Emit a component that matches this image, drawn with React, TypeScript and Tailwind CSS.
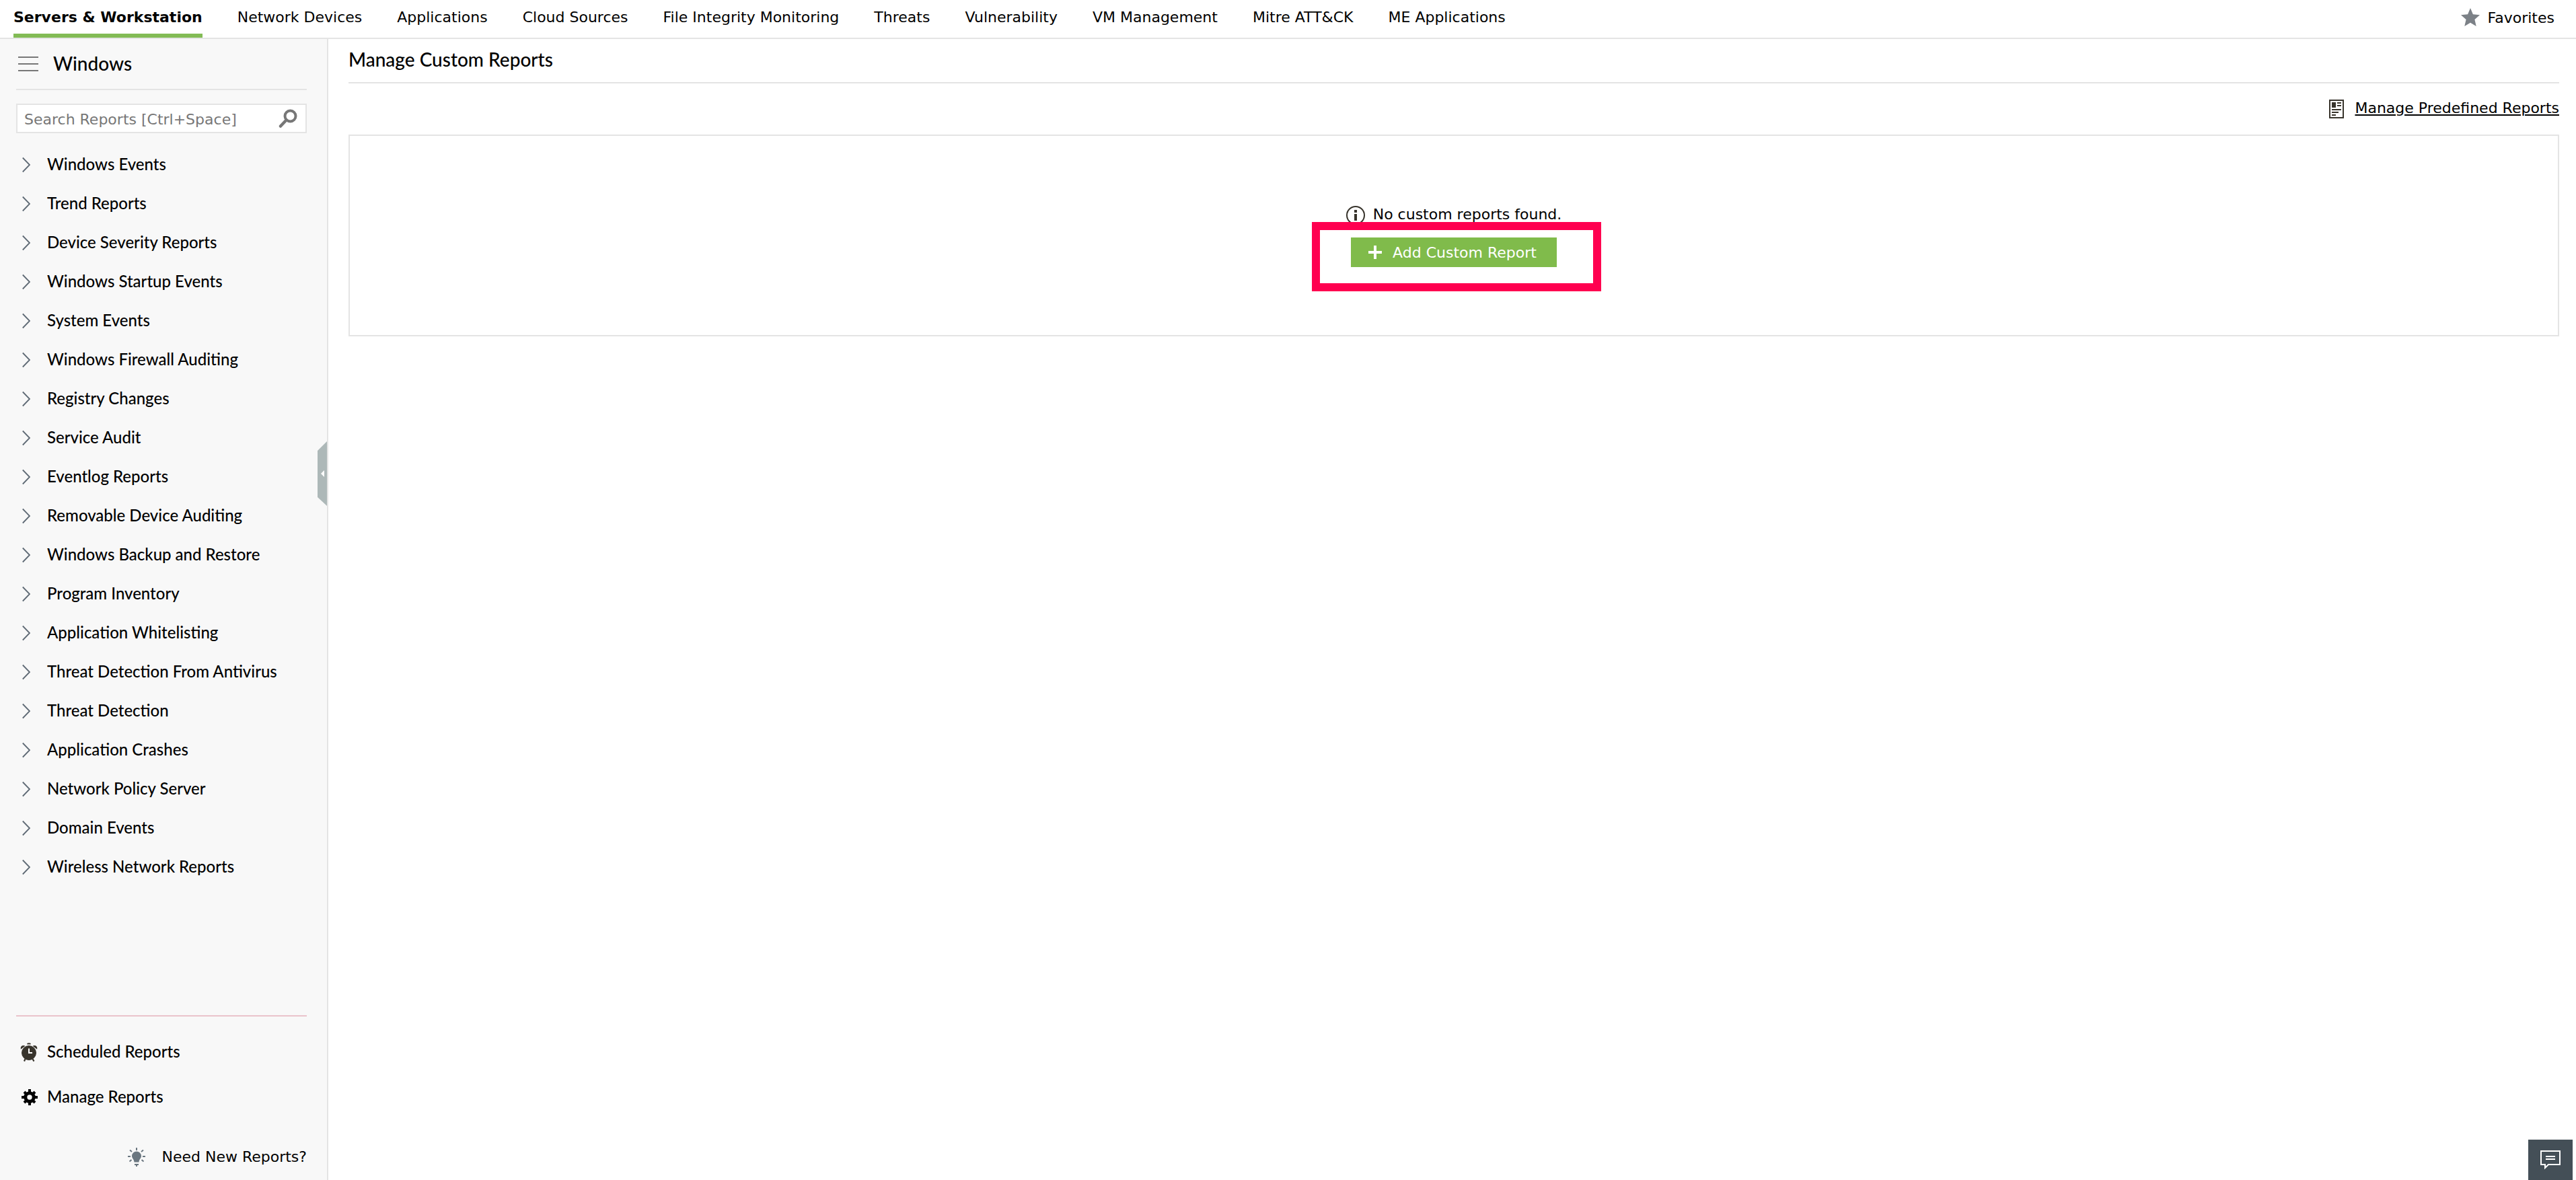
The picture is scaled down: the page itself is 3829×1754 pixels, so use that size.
import { useState } from 'react';

const NAV_ITEMS = [
  'Servers & Workstation',
  'Network Devices',
  'Applications',
  'Cloud Sources',
  'File Integrity Monitoring',
  'Threats',
  'Vulnerability',
  'VM Management',
  'Mitre ATT&CK',
  'ME Applications',
];

const REPORT_GROUPS = [
  'Windows Events',
  'Trend Reports',
  'Device Severity Reports',
  'Windows Startup Events',
  'System Events',
  'Windows Firewall Auditing',
  'Registry Changes',
  'Service Audit',
  'Eventlog Reports',
  'Removable Device Auditing',
  'Windows Backup and Restore',
  'Program Inventory',
  'Application Whitelisting',
  'Threat Detection From Antivirus',
  'Threat Detection',
  'Application Crashes',
  'Network Policy Server',
  'Domain Events',
  'Wireless Network Reports',
];

function StarIcon() {
  return (
    <svg className="w-7 h-7" viewBox="0 0 28 28" fill="#7c8187">
      <path d="M14 0l3.9 9.3 10.1.9-7.600 6.700L22.700 27 14 21.800 5.300 27l2.300-10.100L0 10.200l10.100-.9z" />
    </svg>
  );
}

function SearchIcon() {
  return (
    <svg className="w-7 h-7" viewBox="0 0 28 28" fill="none" stroke="#777">
      <circle cx="17.500" cy="10.500" r="8" strokeWidth="4" />
      <path d="M11.500 16.500L3 25.500" strokeWidth="4.500" strokeLinecap="round" />
    </svg>
  );
}

function ChevronIcon() {
  return (
    <svg className="w-3 h-6 shrink-0" viewBox="0 0 12 24" fill="none" stroke="#5f6a75" strokeWidth="1.800">
      <path d="M.8 1.500L11 12 .8 22.500" />
    </svg>
  );
}

function DocumentIcon() {
  return (
    <svg className="w-[22px] h-7" viewBox="0 0 22 28" fill="#38342c">
      <path fillRule="evenodd" d="M0 0h22v28H0zM2 2v24h18V2z" />
      <path d="M4 4h6v8H4zM12 4h6v2h-6zM12 8h6v2h-6zM4 14h14v2H4zM4 18h10v2H4zM4 22h6v2H4z" />
    </svg>
  );
}

function InfoIcon() {
  return (
    <svg className="w-7 h-7" viewBox="0 0 28 28" fill="#38342c">
      <circle cx="14" cy="14" r="13" fill="none" stroke="#38342c" strokeWidth="2" />
      <path d="M12 6h4v4h-4zM12 12h4v10h-4z" />
    </svg>
  );
}

function PlusIcon() {
  return (
    <svg className="w-5 h-5" viewBox="0 0 20 20" fill="#fff">
      <path d="M8 0h4v8h8v4h-8v8H8v-8H0V8h8z" />
    </svg>
  );
}

function AlarmIcon() {
  return (
    <svg className="w-[26px] h-7" viewBox="0 0 26 28" fill="#38342c" stroke="#38342c">
      <circle cx="13" cy="15" r="10.500" />
      <path d="M10.500 1.800q2.500-1.300 5 0" fill="none" strokeWidth="2" />
      <path d="M1.500 8.500A3.200 3.200 0 0 1 6 5zM24.500 8.500A3.200 3.200 0 0 0 20 5z" strokeWidth="1.500" />
      <path d="M7.500 24L6 27.500M18.500 24l2 3.500" strokeWidth="2.200" />
      <path d="M13 8.500V15h5" fill="none" stroke="#fff" strokeWidth="2" />
    </svg>
  );
}

function GearIcon() {
  return (
    <svg className="w-6 h-6" viewBox="0 0 24 24">
      <circle cx="12" cy="12" r="6.200" fill="none" stroke="#000" strokeWidth="5" />
      <path
        d="M12 0v6M12 18v6M0 12h6M18 12h6M4 4l4 4M16 16l4 4M20 4l-4 4M8 16l-4 4"
        fill="none"
        stroke="#000"
        strokeWidth="4"
      />
    </svg>
  );
}

function BulbIcon() {
  return (
    <svg className="w-[26px] h-7" viewBox="0 0 26 28" fill="#6b7780">
      <path d="M13 5.500a7 7 0 0 1 7 7c0 3-3.200 4.500-3.500 9h-7C9.200 17 6 15.500 6 12.500a7 7 0 0 1 7-7z" />
      <path d="M10 24h6v2h-2v2h-2v-2h-2z" />
      <path
        d="M13 0v4M0 13h4M22 13h4M3 3.500l3 2.500M23 3.500L20 6M2.500 20.500l3-2.500M23.500 20.500l-3-2.500"
        stroke="#6b7780"
        strokeWidth="2"
      />
    </svg>
  );
}

function ChatIcon() {
  return (
    <svg className="w-[30px] h-7" viewBox="0 0 30 28" fill="none" stroke="#fff" strokeWidth="2">
      <path d="M1 1h28v20H12l-5 5v-5H1z" />
      <path d="M8 9h14M8 13h14" />
    </svg>
  );
}

function TopNav() {
  const [active, setActive] = useState(NAV_ITEMS[0]);

  return (
    <header className="flex items-stretch justify-between h-[58px] shrink-0 pl-5 pr-8 border-b-2 border-[#e4e4e4]">
      <nav className="flex gap-[52px]">
        {NAV_ITEMS.map((item) => (
          <a
            key={item}
            href="#"
            onClick={() => setActive(item)}
            className={`pt-2 leading-9 whitespace-nowrap border-b-[6px] ${
              item === active ? 'font-bold border-[#82bb55]' : 'border-transparent'
            }`}
          >
            {item}
          </a>
        ))}
      </nav>
      <button className="flex items-center gap-3 pb-1">
        <StarIcon />
        Favorites
      </button>
    </header>
  );
}

function Sidebar() {
  return (
    <aside className="relative flex flex-col w-[488px] shrink-0 bg-[#f8f8f8] border-r-2 border-[#e4e4e4] pl-6 pr-[30px] font-['Lato',sans-serif] font-medium text-2xl">
      <div className="flex items-center gap-[22px] h-[76px] pl-[3px] border-b-2 border-[#e4e4e4]">
        <button aria-label="Menu" className="flex flex-col gap-2">
          <span className="w-[30px] h-0.5 bg-[#777]" />
          <span className="w-[30px] h-0.5 bg-[#777]" />
          <span className="w-[30px] h-0.5 bg-[#777]" />
        </button>
        <h2 className="text-[28px]">Windows</h2>
      </div>

      <div className="flex items-center h-11 mt-5 pl-[10px] pr-3 bg-white border-2 border-[#e4e4e4]">
        <input
          type="text"
          aria-label="Search Reports"
          placeholder="Search Reports [Ctrl+Space]"
          className="flex-1 min-w-0 pt-[3px] font-['DejaVu_Sans',sans-serif] font-normal text-[22px] outline-none placeholder:text-[#777]"
        />
        <button aria-label="Search">
          <SearchIcon />
        </button>
      </div>

      <ul className="mt-[18px]">
        {REPORT_GROUPS.map((group) => (
          <li key={group}>
            <button className="flex items-center gap-[25px] w-full h-[58px] pl-[9px] whitespace-nowrap">
              <ChevronIcon />
              <span className="pb-0.5">{group}</span>
            </button>
          </li>
        ))}
      </ul>

      <div className="mt-auto border-t-2 border-[#eac3cb] pt-[19px]">
        <a href="#" className="flex items-center gap-[14px] h-[67px] pl-[6px]">
          <AlarmIcon />
          <span className="pb-0.5">Scheduled Reports</span>
        </a>
        <a href="#" className="flex items-center gap-[14px] h-[67px] pl-2">
          <GearIcon />
          <span className="pb-0.5">Manage Reports</span>
        </a>
      </div>
      <a
        href="#"
        className="flex items-center justify-end gap-6 h-[68px] mt-[22px] font-['DejaVu_Sans',sans-serif] font-normal text-[22px]"
      >
        <BulbIcon />
        Need New Reports?
      </a>

      <button aria-label="Collapse sidebar" className="absolute right-0 top-[598px]">
        <svg className="w-[14px] h-24" viewBox="0 0 14 96">
          <path d="M0 14L14 0v96L0 83z" fill="#adb8b8" />
          <path d="M5 48l5-5v10z" fill="#fff" />
        </svg>
      </button>
    </aside>
  );
}

function MainContent() {
  return (
    <main className="flex-1 min-w-0 pl-[30px] pr-[25px]">
      <h1 className="h-[66px] pt-[10px] leading-10 border-b-2 border-[#e4e4e4] font-['Lato',sans-serif] font-medium text-[28px]">
        Manage Custom Reports
      </h1>

      <div className="flex items-center justify-end h-[76px]">
        <a href="#" className="flex items-center gap-4">
          <DocumentIcon />
          <span className="pb-1 underline decoration-2 underline-offset-2">Manage Predefined Reports</span>
        </a>
      </div>

      <section className="flex flex-col items-center h-[300px] pt-[102px] border-2 border-[#e4e4e4]">
        <p className="flex items-center gap-3 h-8">
          <InfoIcon />
          <span className="pb-1">No custom reports found.</span>
        </p>
        <div className="relative mt-[17px]">
          <button className="flex items-center gap-4 h-11 pl-[26px] pr-[30px] bg-[#80bb4b] text-white whitespace-nowrap">
            <PlusIcon />
            Add Custom Report
          </button>
          {/* highlight around the button */}
          <div className="absolute -top-[23px] -left-[58px] -right-[66px] -bottom-9 border-12 border-[#ff0050] pointer-events-none" />
        </div>
      </section>
    </main>
  );
}

export default function App() {
  return (
    <div className="flex flex-col min-h-screen bg-white text-black font-['DejaVu_Sans',sans-serif] text-[22px]">
      <TopNav />
      <div className="flex flex-1">
        <Sidebar />
        <MainContent />
      </div>
      <button
        aria-label="Chat"
        className="fixed right-[5px] bottom-0 flex items-center justify-center w-[66px] h-15 bg-[#444f57]"
      >
        <ChatIcon />
      </button>
    </div>
  );
}
